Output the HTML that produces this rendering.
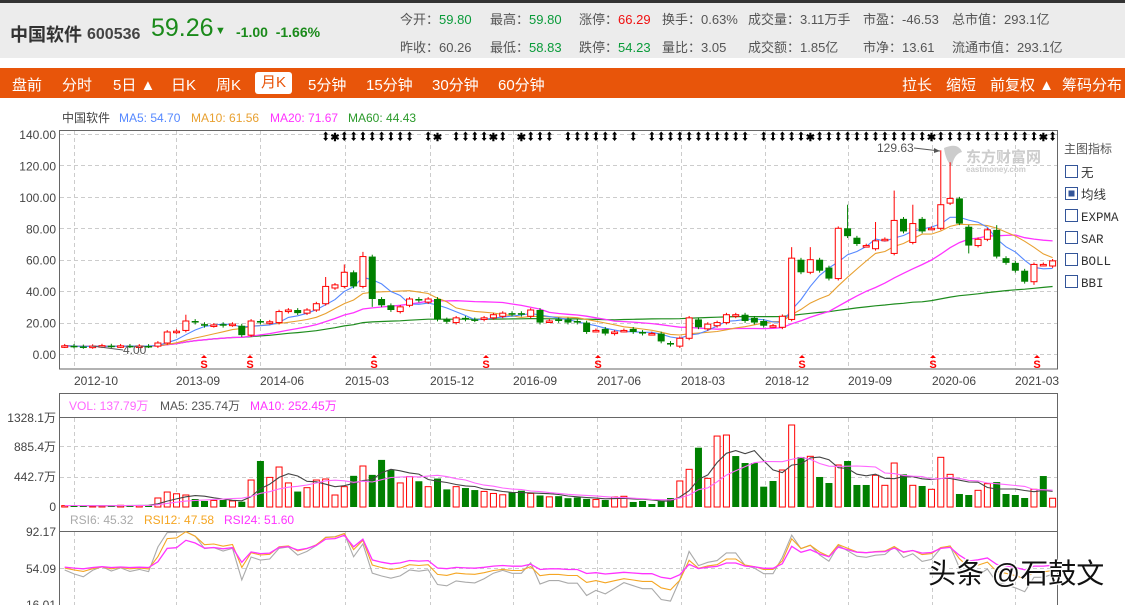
<!DOCTYPE html>
<html><head><meta charset="utf-8">
<style>
*{margin:0;padding:0;box-sizing:border-box}
body{width:1125px;height:605px;overflow:hidden;background:#fff;font-family:"Liberation Sans","Noto Sans CJK SC",sans-serif;position:relative}
.top{position:absolute;left:0;top:0;width:1125px;height:3px;background:#333}
.hdr{position:absolute;left:0;top:3px;width:1125px;height:55px;background:#ececec}
.abs{position:absolute;white-space:nowrap}
.st{font-size:13px;color:#555}
.g{color:#0a9b3a}.r{color:#f01010}
.bar{position:absolute;left:0;top:68px;width:1125px;height:30px;background:#e8550a}
.bar span{position:absolute;top:6px;color:#fff;font-size:15px;white-space:nowrap}
.sel{background:#fff;color:#e8550a!important;border-radius:3px;padding:0 6px;top:4px!important;height:22px;line-height:22px}
</style></head><body>
<div class="top"></div>
<div class="hdr"></div>
<div class="abs" style="left:10px;top:21px;font-size:18px;font-weight:bold;color:#333">中国软件</div>
<div class="abs" style="left:87px;top:26px;font-size:16px;font-weight:bold;color:#444">600536</div>
<div class="abs" style="left:151px;top:14px;font-size:25px;color:#1a8a1a">59.26</div>
<div class="abs" style="left:215px;top:25px;font-size:11px;color:#1a8a1a">▼</div>
<div class="abs" style="left:236px;top:24px;font-size:14px;font-weight:bold;color:#1a8a1a">-1.00&nbsp;&nbsp;-1.66%</div>

<div class="abs st" style="left:400px;top:9px">今开：<span class="g">59.80</span></div>
<div class="abs st" style="left:490px;top:9px">最高：<span class="g">59.80</span></div>
<div class="abs st" style="left:579px;top:9px">涨停：<span class="r">66.29</span></div>
<div class="abs st" style="left:662px;top:9px">换手：0.63%</div>
<div class="abs st" style="left:748px;top:9px">成交量：3.11万手</div>
<div class="abs st" style="left:863px;top:9px">市盈：-46.53</div>
<div class="abs st" style="left:952px;top:9px">总市值：293.1亿</div>
<div class="abs st" style="left:400px;top:37px">昨收：60.26</div>
<div class="abs st" style="left:490px;top:37px">最低：<span class="g">58.83</span></div>
<div class="abs st" style="left:579px;top:37px">跌停：<span class="g">54.23</span></div>
<div class="abs st" style="left:662px;top:37px">量比：3.05</div>
<div class="abs st" style="left:748px;top:37px">成交额：1.85亿</div>
<div class="abs st" style="left:863px;top:37px">市净：13.61</div>
<div class="abs st" style="left:952px;top:37px">流通市值：293.1亿</div>

<div class="bar">
<span style="left:12px">盘前</span><span style="left:62px">分时</span><span style="left:113px">5日 ▲</span><span style="left:171px">日K</span><span style="left:216px">周K</span><span class="sel" style="left:255px">月K</span><span style="left:308px">5分钟</span><span style="left:366px">15分钟</span><span style="left:432px">30分钟</span><span style="left:498px">60分钟</span>
<span style="left:902px">拉长</span><span style="left:946px">缩短</span><span style="left:990px">前复权 ▲</span><span style="left:1062px">筹码分布</span>
</div>

<svg id="c" class="abs" style="left:0;top:0" width="1125" height="605" xmlns="http://www.w3.org/2000/svg" font-family="Liberation Sans, Noto Sans CJK SC, sans-serif"></svg>

<div class="abs" style="left:928px;top:552px;font-size:28px;color:#111;text-shadow:0 0 2px #fff,0 0 2px #fff,1px 1px 0 #fff,-1px -1px 0 #fff">头条 @石鼓文</div>

<script>
var D=[[5,5.2],[5.2,4.8],[4.8,4.5],[4.5,5],[5,5.3],[5.3,5],[5,5.2],[5.2,5],[5,5.1],[5.1,5],
[5,7],[7,14],[14,14.5],[15,21],[21,20],[19,18],[18,18.5],[19,18],[18.5,19],[18,12],
[12,21],[21,20],[20,20.5],[20,27],[27,28],[28,26],[26,28],[28,32],[32,43],[42,44],
[43,52],[52,43],[43,62],[62,35],[35,31],[31,28],[27,30],[31,35],[35,34],[33,35],
[35,22],[22,20.5],[20,23],[23,22],[22,21.5],[22,23],[23,25],[24,26],[26,25],[26,25],
[24,28],[28,20],[21,21],[22,21],[22,20],[21,20],[20,14],[15,15],[16,13],[13,14],
[15,15],[16,14],[14,13],[13,13],[13,8],[7,6],[5,10],[10,23],[22,17],[16,19],
[18,20],[20,25],[24,25],[25,21],[23,20],[21,18],[18,18],[17,24],[22,61],[60,52],
[52,60],[60,53],[55,48],[48,80],[80,75],[74,70],[69,69],[67,72],[73,73],[64,85],
[86,78],[71,83],[86,78],[80,80],[80,95],[96,99],[99,83],[81,69],[69,73],[73,79],
[79,62],[61,58],[58,53],[53,46],[46,57],[57,57],[56,59.26]];
var HI={78:68,80:68,84:95,89:104,94:129.63,95:122,87:84,32:65,30:57,28:49,13:25,96:100,91:95,100:82};
var LO={33:30,97:64,104:44,96:82};
var V=[20,25,15,15,20,20,25,30,20,30,133,221,195,177,118,89,97,103,89,78,398,679,437,590,355,228,285,398,413,177,300,460,605,474,695,545,355,450,380,300,420,260,300,280,250,230,200,180,220,240,200,170,150,160,130,140,120,110,
103,148,158,74,89,44,88,133,384,556,875,423,1047,1062,752,649,649,300,384,546,1210,738,748,443,354,620,679,325,325,468,320,649,482,320,310,261,733,482,192,177,246,344,368,192,177,133,261,457,129];
var VC="grrggggg rrgrrrggggg rrgrggrgg grrrgrgrrrgg rrggggrgr".replace(/ /g,"");
var N=D.length, s="";
function X(i){return 64.7+i*9.32}
function PY(p){return 354-p*1.5714}
function VY(v){return 507-v/1328.1*90}
function RY(r){return 605-(r-16.01)/(92.17-16.01)*74}
s+='<g stroke="#ccc" stroke-dasharray="4,3" stroke-width="1">';
for(var k=0;k<=7;k++){var y=Math.round(PY(k*20))+.5;s+='<line x1="60" x2="1057" y1="'+y+'" y2="'+y+'"/>';}
[446.5,477.5,568.5].forEach(function(y){s+='<line x1="60" x2="1057" y1="'+y+'" y2="'+y+'"/>';});
var GX=[74,176,260,345,430,513,597,681,765,848,932,1015];
GX.forEach(function(x){x+=.5;s+='<line x1="'+x+'" x2="'+x+'" y1="131" y2="369"/><line x1="'+x+'" x2="'+x+'" y1="418" y2="507"/><line x1="'+x+'" x2="'+x+'" y1="532" y2="605"/>';});
s+='</g>';
s+='<g fill="none" stroke="#666" stroke-width="1"><rect x="59.5" y="130.5" width="998" height="238.5"/><rect x="59.5" y="393.5" width="998" height="215"/><line x1="59.5" x2="1057.5" y1="417.5" y2="417.5"/><line x1="59.5" x2="1057.5" y1="531.5" y2="531.5"/></g>';
s+='<g font-size="12" fill="#444" text-anchor="end">';
for(var k=0;k<=7;k++){s+='<text x="56" y="'+(PY(k*20)+5)+'">'+(k*20).toFixed(2)+'</text>';}
s+='<text x="56" y="422">1328.1万</text><text x="56" y="451">885.4万</text><text x="56" y="481">442.7万</text><text x="56" y="511">0</text>';
s+='<text x="56" y="536">92.17</text><text x="56" y="573">54.09</text><text x="56" y="609">16.01</text></g>';
var DL=["2012-10","2013-09","2014-06","2015-03","2015-12","2016-09","2017-06","2018-03","2018-12","2019-09","2020-06","2021-03"];
s+='<g font-size="12" fill="#444">';GX.forEach(function(x,j){s+='<text x="'+x+'" y="385">'+DL[j]+'</text>';});s+='</g>';
s+='<g font-size="12"><text x="62" y="122" fill="#444">中国软件</text><text x="119" y="122" fill="#5588ff">MA5: 54.70</text><text x="191" y="122" fill="#e8a030">MA10: 61.56</text><text x="270" y="122" fill="#ff33ff">MA20: 71.67</text><text x="348" y="122" fill="#2a9a2a">MA60: 44.43</text>';
s+='<text x="69" y="410" fill="#ff66ff">VOL: 137.79万</text><text x="160" y="410" fill="#555">MA5: 235.74万</text><text x="250" y="410" fill="#ff33ff">MA10: 252.45万</text>';
s+='<text x="70" y="524" fill="#aaa">RSI6: 45.32</text><text x="144" y="524" fill="#f5a623">RSI12: 47.58</text><text x="224" y="524" fill="#ff33ff">RSI24: 51.60</text></g>';
s+='<g fill="#ccc"><path d="M944 148 q14-6 18 4 q-8 2-10 14 q-6-4-8-18z"/><text x="966" y="162" font-size="15" font-weight="bold">东方财富网</text><text x="966" y="172" font-size="8" font-weight="bold">eastmoney.com</text></g>';
var C=D.map(function(d){return d[1]});
function ma(a,n){return a.map(function(_,i){var st=Math.max(0,i-n+1),t=0;for(var j=st;j<=i;j++)t+=a[j];return t/(i-st+1);});}
function line(a,fy,col,w,from){var p=[];for(var i=from||0;i<a.length;i++)p.push(X(i).toFixed(1)+','+fy(a[i]).toFixed(1));return '<polyline fill="none" stroke="'+col+'" stroke-width="'+(w||1)+'" points="'+p.join(' ')+'"/>';}
s+=line(ma(C,60),PY,"#1e8c1e",1.2)+line(ma(C,20),PY,"#ff33ff",1.3)+line(ma(C,10),PY,"#e8a030",1.1)+line(ma(C,5),PY,"#5588ff",1.1);
for(var i=0;i<N;i++){var o=D[i][0],c=D[i][1],x=X(i),h=HI[i]||Math.max(o,c)+1.2,l=LO[i]||Math.min(o,c)-1.2;
var up=c>=o,col=up?"#ff0000":"#008000",t=PY(Math.max(o,c)),b=PY(Math.min(o,c));if(b-t<1.5)b=t+1.5;
s+='<line x1="'+x+'" x2="'+x+'" y1="'+PY(h)+'" y2="'+PY(l)+'" stroke="'+col+'"/>';
if(up)s+='<rect x="'+(x-3)+'" y="'+t+'" width="6" height="'+(b-t)+'" fill="#fff" stroke="'+col+'"/>';
else s+='<rect x="'+(x-3.5)+'" y="'+t+'" width="7" height="'+(b-t)+'" fill="'+col+'"/>';}
s+='<text x="877" y="152" font-size="12" fill="#555">129.63</text><line x1="914" y1="148" x2="940" y2="151" stroke="#555"/><path d="M940 151 l-6-3 0 5z" fill="#555"/>';
s+='<text x="123" y="354" font-size="12" fill="#555">4.00</text><line x1="92" y1="346" x2="123" y2="350" stroke="#555"/>';
var MK=[],ranges=[[28,37],[39,40],[42,47],[49,52],[54,59],[61,61],[63,73],[75,106]];
ranges.forEach(function(r){for(var i=r[0];i<=r[1];i++)MK.push(i);});
var STAR={29:1,40:1,46:1,49:1,80:1,93:1,105:1};
MK.forEach(function(i){var x=X(i);if(STAR[i])s+='<text x="'+x+'" y="141" font-size="11" font-weight="bold" text-anchor="middle" fill="#000">✱</text>';
else s+='<path d="M'+(x-2.5)+' 134.5 l2.5-3 2.5 3z M'+(x-2.5)+' 138 l2.5 3 2.5-3z" fill="#000"/><rect x="'+(x-1)+'" y="134" width="2" height="4.5" fill="#000"/>';});
[204,250,374,486,598,802,933,1037].forEach(function(x){s+='<path d="M'+(x-3)+' 358 l3-3 3 3z" fill="#f00"/><text x="'+x+'" y="368" font-size="11" font-weight="bold" fill="#f00" text-anchor="middle">S</text>';});
for(var i=0;i<N;i++){var x=X(i),col;if(i>=58)col=VC[i-58]=="r";else col=D[i][1]>=D[i][0];var y=VY(V[i]);
if(col)s+='<rect x="'+(x-3)+'" y="'+y+'" width="6" height="'+(507-y)+'" fill="#fff" stroke="#f00"/>';
else s+='<rect x="'+(x-3.5)+'" y="'+y+'" width="7" height="'+(507-y)+'" fill="#008000"/>';}
s+=line(ma(V,5),VY,"#444",1.1)+line(ma(V,10),VY,"#ff66ff",1.1);
function rsi(n,k,b){var r=[],ag=0.5,al=0.5;for(var i=0;i<N;i++){var d=i?C[i]-C[i-1]:0,g=Math.max(d,0),l=Math.max(-d,0);ag=(ag*(n-1)+g)/n;al=(al*(n-1)+l)/n;var v=100*ag/(ag+al);r.push(Math.max(20,Math.min(91.5,(v-50)*k+b)));}return r;}
s+=line(rsi(6,0.9,52),RY,"#aaa",1.1)+line(rsi(12,1.0,54),RY,"#f5a623",1.1)+line(rsi(24,1.1,55),RY,"#ff33ff",1.3);
s+='<text x="1064" y="153" font-size="12" fill="#555">主图指标</text>';
var LB=["无","均线","EXPMA","SAR","BOLL","BBI"];
LB.forEach(function(t,j){var y=165+j*22;s+='<rect x="1065.5" y="'+(y+.5)+'" width="12" height="12" fill="#fff" stroke="#335599"/>';if(j==1)s+='<rect x="1068.5" y="'+(y+3.5)+'" width="6" height="6" fill="#335599"/>';s+='<text x="1081" y="'+(y+12)+'" font-size="12.5" fill="#333" font-family="Liberation Mono, Noto Sans CJK SC, monospace">'+t+'</text>';});
document.getElementById("c").innerHTML=s;
</script>
</body></html>
